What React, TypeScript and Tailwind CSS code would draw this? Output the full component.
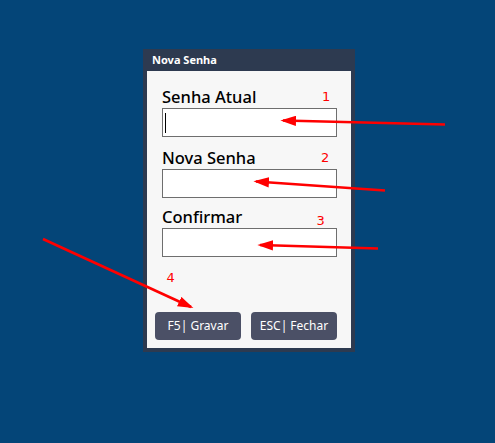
const arrows = [
  { x1: 445, y1: 124.5, x2: 283, y2: 120.5 },
  { x1: 385, y1: 190.5, x2: 256, y2: 181.5 },
  { x1: 378, y1: 248.5, x2: 260, y2: 245 },
  { x1: 43, y1: 239, x2: 191, y2: 307 },
];

const marks = [
  { n: "1", x: 322, y: 101 },
  { n: "2", x: 321, y: 162 },
  { n: "3", x: 316.5, y: 224.5 },
  { n: "4", x: 166.5, y: 282 },
];

function Field({ label, cursor, className }: { label: string; cursor?: boolean; className?: string }) {
  return (
    <div className={"flex flex-col " + (className ?? "")}>
      <label className="h-[23px] text-[16.5px] font-medium leading-[26px] text-black">{label}</label>
      <div className="mt-[1px] flex h-[29px] w-[175px] items-center border border-[#6e6e6e] bg-white px-[2px]">
        {cursor && <span className="h-[20px] w-px bg-black" />}
      </div>
    </div>
  );
}

function Annotations() {
  return (
    <svg className="pointer-events-none absolute inset-0" width="495" height="443">
      <defs>
        <marker id="head" markerWidth="6" markerHeight="4" refX="5" refY="2" orient="auto" markerUnits="strokeWidth">
          <path d="M0,0 L6,2 L0,4 z" fill="#ff0000" />
        </marker>
      </defs>
      {arrows.map((a, i) => (
        <line
          key={i}
          x1={a.x1}
          y1={a.y1}
          x2={a.x2}
          y2={a.y2}
          stroke="#ff0000"
          strokeWidth="2.6"
          markerEnd="url(#head)"
        />
      ))}
      {marks.map((m) => (
        <text
          key={m.n}
          x={m.x}
          y={m.y}
          fill="#ff0000"
          fontSize="13"
          fontFamily="'DejaVu Sans', sans-serif"
        >
          {m.n}
        </text>
      ))}
    </svg>
  );
}

export default function App() {
  return (
    <div className="relative h-[443px] w-[495px] overflow-hidden bg-[#044578] pt-[49px] font-['Noto_Sans',sans-serif]">
      <div className="ml-[143px] flex w-[212px] flex-col bg-[#2d3a50] px-[4px] pb-[4px]">
        <div className="flex h-[22px] items-center pl-[5px] text-[11px] font-bold text-white">
          Nova Senha
        </div>
        <div className="flex h-[277px] flex-col bg-[#f7f7f7]">
          <div className="flex flex-col pl-[15px] pt-[13px]">
            <Field label="Senha Atual" cursor />
            <Field label="Nova Senha" className="mt-[8px]" />
            <Field label="Confirmar" className="mt-[6px]" />
          </div>
          <div className="mt-auto flex gap-[10px] pb-[8px] pl-[8px]">
            <button className="h-[28px] w-[86px] rounded-[4px] bg-[#4b5066] text-[12px] text-white">
              F5| Gravar
            </button>
            <button className="h-[28px] w-[86px] rounded-[4px] bg-[#4b5066] text-[12px] text-white">
              ESC| Fechar
            </button>
          </div>
        </div>
      </div>
      <Annotations />
    </div>
  );
}
